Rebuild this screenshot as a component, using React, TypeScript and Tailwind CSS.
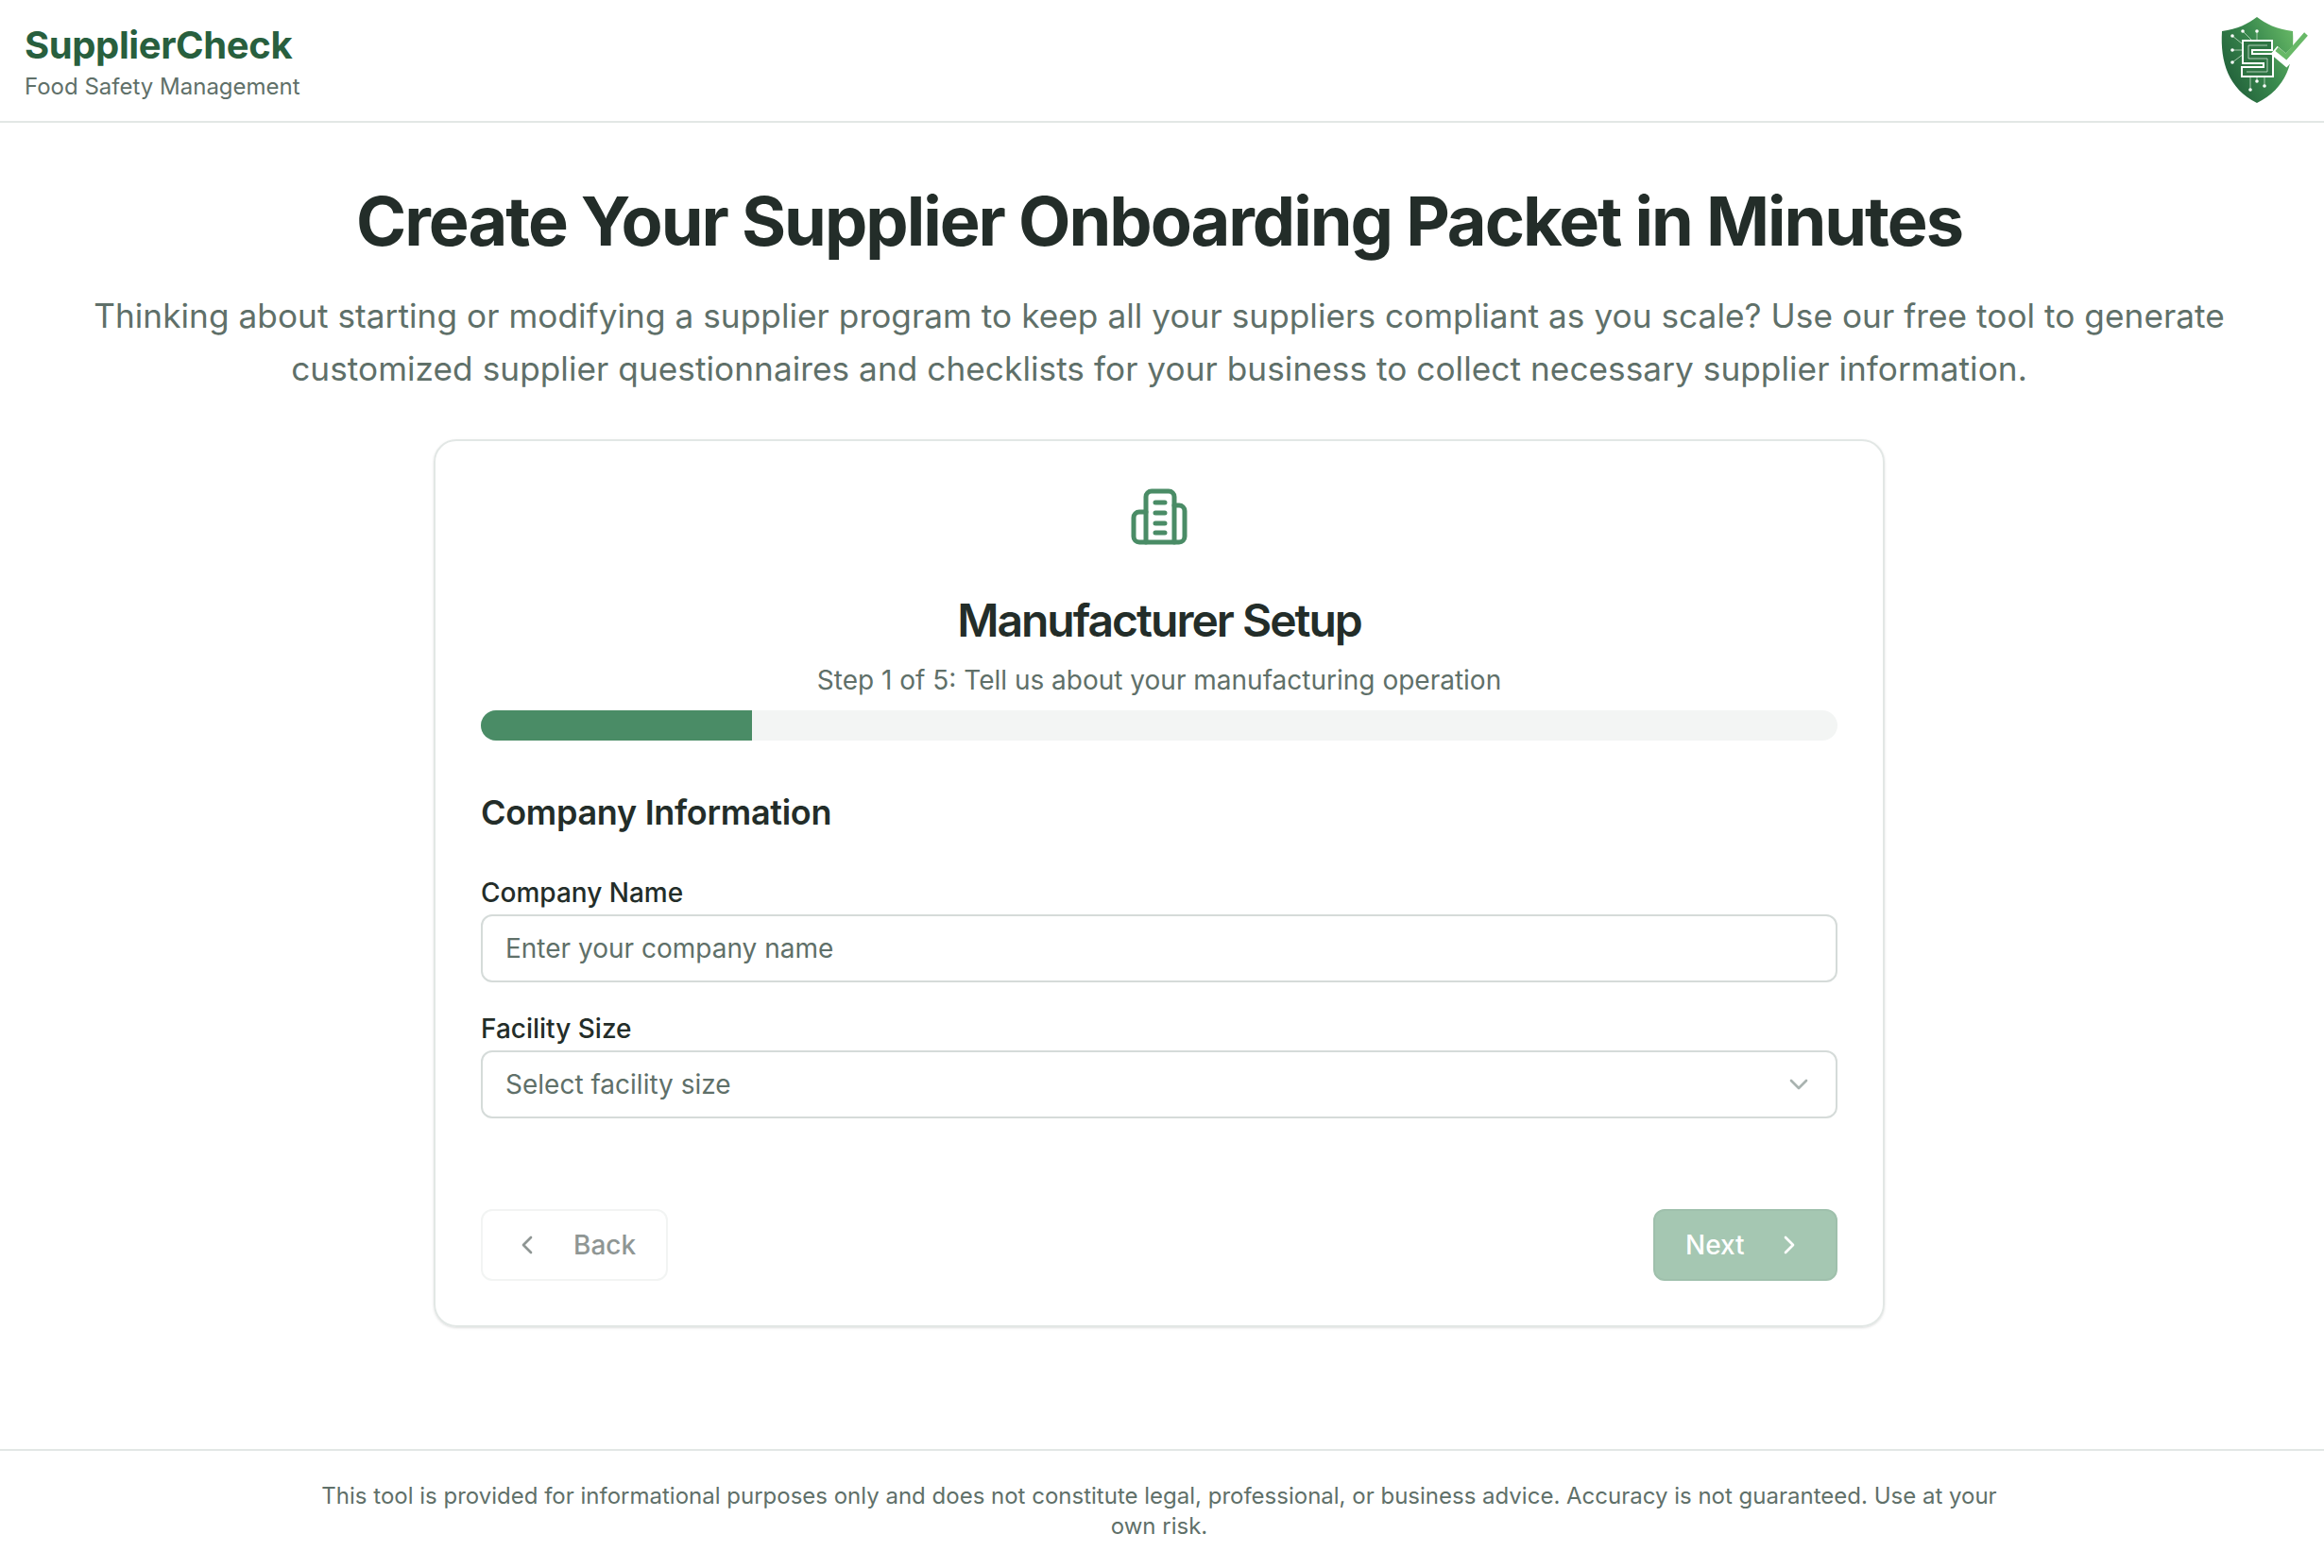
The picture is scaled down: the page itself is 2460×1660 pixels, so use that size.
import React from "react";

function Logo() {
  return (
    <svg width="96" height="96" viewBox="0 0 96 96" className="block">
      <defs>
        <linearGradient id="sg" x1="0" y1="0.75" x2="1" y2="0.15">
          <stop offset="0" stopColor="#1f5c38" />
          <stop offset="0.55" stopColor="#3a8a4e" />
          <stop offset="1" stopColor="#66b765" />
        </linearGradient>
      </defs>
      <path d="M39 2 C48 9 60 15 77 17 C79 50 70 78 39 93 C9 78 0 50 2 17 C18 15 30 9 39 2 Z" fill="url(#sg)" />
      <g stroke="#c5ddc9" strokeWidth="0.8" fill="none">
        <path d="M13 22 L28 34 M24 17 L35 28 M39 17 L39 27 M13 37 L26 37 M13 50 L25 41 M32 79 L32 64 M39 70 L39 60 M47 75 L47 62" />
      </g>
      <g fill="#ffffff">
        <circle cx="13" cy="22" r="1.8" /><circle cx="24" cy="17" r="1.8" /><circle cx="39" cy="17" r="1.8" />
        <circle cx="13" cy="37" r="1.8" /><circle cx="13" cy="50" r="1.8" /><circle cx="32" cy="79" r="1.8" />
        <circle cx="39" cy="70" r="1.8" /><circle cx="47" cy="75" r="1.8" />
      </g>
      <path d="M56 32 H29 V46 H51 V60 H22" fill="none" stroke="#ffffff" strokeWidth="12" />
      <path d="M54 32 H29 V46 H51 V60 H24" fill="none" stroke="#2e7443" strokeWidth="8" />
      <path d="M50 32 H30 V46 H50 V60 H28" fill="none" stroke="#cfe3d2" strokeWidth="0.8" />
      <path d="M57 37 L70 48 L93 24" fill="none" stroke="#ffffff" strokeWidth="11" />
      <path d="M60 36 L70 44 L91 20" fill="none" stroke="#68b867" strokeWidth="5" />
    </svg>
  );
}

function BuildingIcon() {
  return (
    <svg width="60" height="60" viewBox="0 0 60 60" fill="none" stroke="#4a8c66" strokeWidth="5" strokeLinecap="round" strokeLinejoin="round">
      <path d="M16 57 V9 a6 6 0 0 1 6 -6 H40 a6 6 0 0 1 6 6 V57" />
      <path d="M16 25 H9 a6 6 0 0 0 -6 6 V51 a6 6 0 0 0 6 6 H51 a6 6 0 0 0 6 -6 V24 a6 6 0 0 0 -6 -6 H46" />
      <path d="M26 15 H36 M26 26 H36 M26 37 H36 M26 47 H36" strokeWidth="5" />
    </svg>
  );
}

function Chevron({ d, color }: { d: string; color: string }) {
  return (
    <svg width={32} height={32} viewBox="0 0 24 24" fill="none" stroke={color} strokeWidth={2} strokeLinecap="round" strokeLinejoin="round" className="shrink-0">
      <path d={d} />
    </svg>
  );
}

export default function App() {
  return (
    <div className="flex min-h-[1660px] flex-col bg-white text-[#232d29] [font-family:Inter,'Liberation_Sans',sans-serif]">
      <header className="flex h-[130px] items-center justify-between border-b-2 border-[#e2e7e5] pr-[14px] pl-[26px]">
        <div className="pt-[3px]">
          <div className="text-[40px] leading-[48px] font-bold tracking-[-0.4px] text-[#285f3e]">SupplierCheck</div>
          <div className="mt-[4px] text-[24px] leading-[32px] text-[#5f7069]">Food Safety Management</div>
        </div>
        <Logo />
      </header>

      <main className="flex flex-1 flex-col items-center pr-[6px]">
        <h1 className="mt-[60px] text-[72px] leading-[88px] font-bold tracking-[-2px]">
          Create Your Supplier Onboarding Packet in Minutes
        </h1>
        <p className="mt-[28px] w-[2280px] text-center text-[35.2px] leading-[56px] tracking-[0.05px] text-[#5f7069]">
          Thinking about starting or modifying a supplier program to keep all your suppliers compliant as you scale? Use our free tool to generate customized supplier questionnaires and checklists for your business to collect necessary supplier information.
        </p>

        <section className="mt-[47px] flex h-[940px] w-[1536px] flex-col rounded-[24px] border-2 border-[#e2e7e5] px-[48px] pt-[50px] shadow-sm">
          <div className="flex justify-center"><BuildingIcon /></div>
          <h2 className="mt-[48px] text-center text-[48px] leading-[64px] font-semibold tracking-[-2px]">Manufacturer Setup</h2>
          <p className="mt-[11px] text-center text-[28px] leading-[40px] text-[#5f7069]">Step 1 of 5: Tell us about your manufacturing operation</p>
          <div className="mt-[12px] h-[32px] w-full overflow-hidden rounded-full bg-[#f3f5f4]">
            <div className="h-full w-1/5 bg-[#4a8c66]" />
          </div>

          <h3 className="mt-[52px] text-[36px] leading-[48px] font-semibold tracking-[-0.3px]">Company Information</h3>

          <label className="mt-[41px] block text-[28px] leading-[40px] font-medium">Company Name</label>
          <div className="mt-[3px] flex h-[72px] items-center rounded-[12px] border-2 border-[#d5dbd9] px-[24px] text-[28px] text-[#5f7069]">Enter your company name</div>

          <label className="mt-[29px] block text-[28px] leading-[40px] font-medium">Facility Size</label>
          <div className="mt-[3px] flex h-[72px] items-center justify-between rounded-[12px] border-2 border-[#d5dbd9] pr-[23px] pl-[24px] text-[28px] text-[#5f7069]">
            <span>Select facility size</span>
            <Chevron d="M6 9l6 6 6-6" color="#a9b3b0" />
          </div>

          <div className="mt-[96px] flex items-center justify-between">
            <button className="flex h-[76px] w-[198px] items-center gap-[33px] rounded-[12px] border-2 border-[#f2f4f3] pl-[31px] text-[28px] font-medium text-[#8f9694]">
              <Chevron d="M15 18l-6-6 6-6" color="#8f9694" />
              <span>Back</span>
            </button>
            <button className="flex h-[76px] w-[195px] items-center gap-[31px] rounded-[12px] border-2 border-[#9fc0ac] bg-[#a5c7b2] pl-[32px] text-[28px] font-medium text-white">
              <span>Next</span>
              <Chevron d="M9 18l6-6-6-6" color="#ffffff" />
            </button>
          </div>
        </section>

        <div className="flex-1" />
      </main>

      <footer className="flex h-[126px] justify-center border-t-2 border-[#e2e7e5] pt-[32px] pr-[6px]">
        <p className="w-[1800px] text-center text-[24px] leading-[32px] text-[#5f7069]">
          This tool is provided for informational purposes only and does not constitute legal, professional, or business advice. Accuracy is not guaranteed. Use at your own risk.
        </p>
      </footer>
    </div>
  );
}
